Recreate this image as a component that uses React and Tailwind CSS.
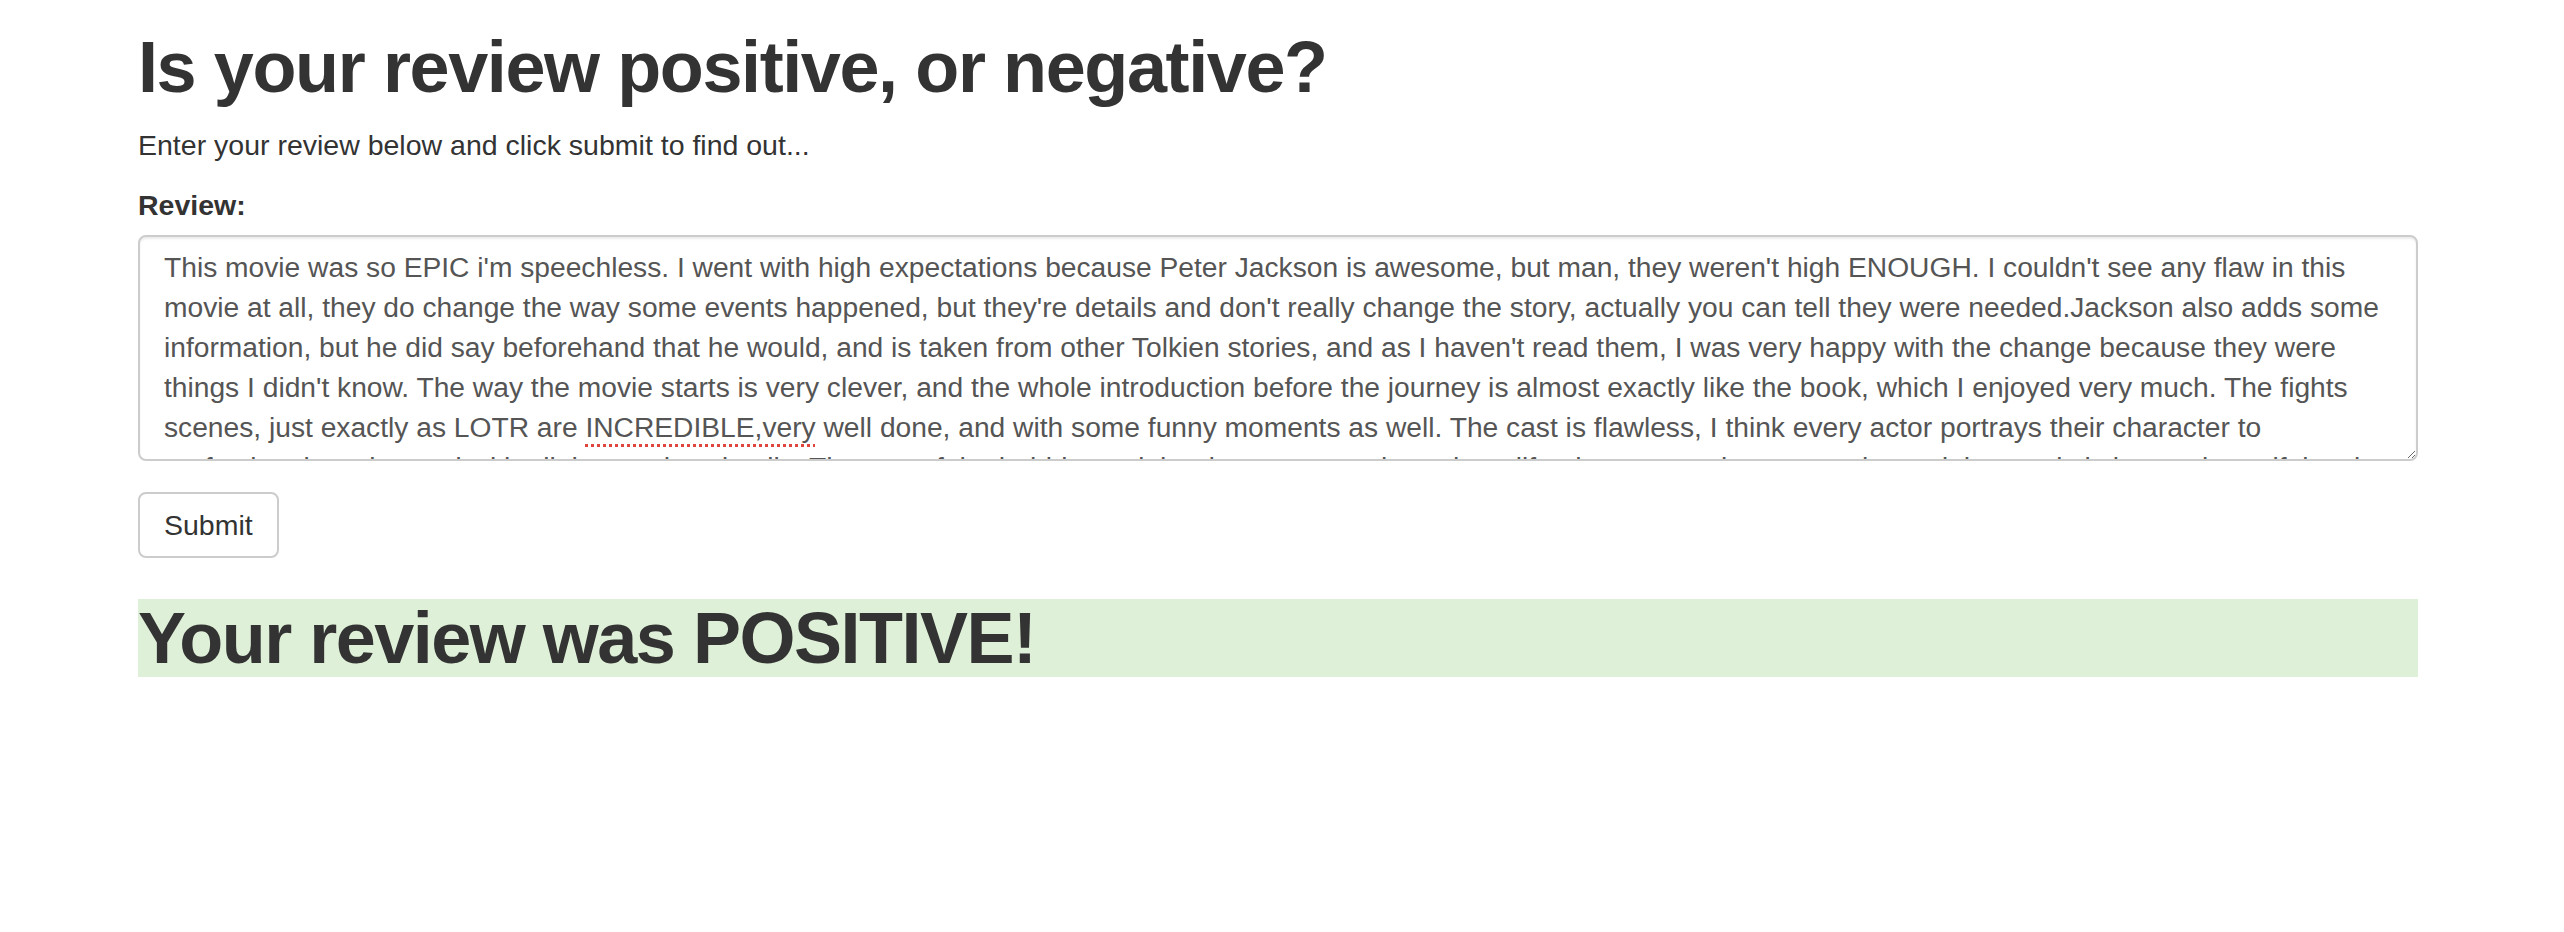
import React from 'react'

const reviewBefore =
  "This movie was so EPIC i'm speechless. I went with high expectations because Peter Jackson is awesome, but man, they weren't high ENOUGH. I couldn't see any flaw in this movie at all, they do change the way some events happened, but they're details and don't really change the story, actually you can tell they were needed.Jackson also adds some information, but he did say beforehand that he would, and is taken from other Tolkien stories, and as I haven't read them, I was very happy with the change because they were things I didn't know. The way the movie starts is very clever, and the whole introduction before the journey is almost exactly like the book, which I enjoyed very much. The fights scenes, just exactly as LOTR are "

const reviewAfter =
  " well done, and with some funny moments as well. The cast is flawless, I think every actor portrays their character to perfection, knowing and with all those other details. The rest of the hobbits and the dwarves were brought to life, the scenery is spectacular and the music is just as beautiful as in the trilogy, it really feels like coming home again. I can't wait for the next one."

const App = () => {
  return (
    <div className="min-h-screen bg-white font-['Liberation_Sans',Arial,sans-serif] text-[#333]">
      <div className="pl-[138px] pt-[28px]">
        <div className="w-[2280px]">
          <h1 className="text-[72px] leading-[79px] font-bold tracking-[-1.4px]">
            Is your review positive, or negative?
          </h1>
          <p className="mt-[18px] text-[28.5px] leading-[40px]">
            Enter your review below and click submit to find out...
          </p>

          <form onSubmit={(e) => e.preventDefault()}>
            <label className="mt-[20px] block text-[28.5px] leading-[40px] font-bold">Review:</label>
            {/* textarea look-alike so the spellcheck squiggle can be drawn */}
            <div className="mt-[10px] h-[226px] resize-y overflow-hidden rounded-[8px] border-2 border-[#ccc] bg-white px-[24px] pt-[10px] pb-[12px] text-[28.2px] leading-[40px] text-[#555] shadow-[inset_0_2px_2px_rgba(0,0,0,0.075)]">
              {reviewBefore}
              <span className="underline decoration-[#e0443e] decoration-dotted decoration-[3px] underline-offset-[7px]">
                INCREDIBLE,very
              </span>
              {reviewAfter}
            </div>

            <button
              type="submit"
              className="mt-[31px] rounded-[8px] border-2 border-[#ccc] bg-white px-[24px] py-[11px] text-[28.5px] leading-[40px] text-[#333]"
            >
              Submit
            </button>
          </form>

          <h1 className="mt-[41px] bg-[#dff0d8] text-[72px] leading-[78px] font-bold tracking-[-1.5px]">
            Your review was POSITIVE!
          </h1>
        </div>
      </div>
    </div>
  )
}

export default App
